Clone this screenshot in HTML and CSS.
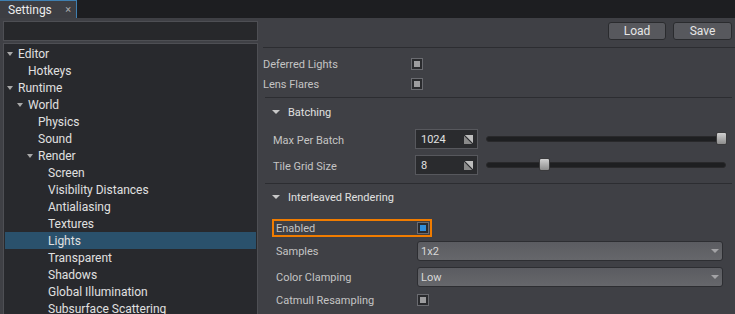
FILE: index.html
```html
<!DOCTYPE html>
<html>
<head>
<meta charset="utf-8">
<title>Settings</title>
<link rel="stylesheet" href="styles.css">
</head>
<body>
<div class="app">
  <div class="tabbar">
    <div class="tab"><span class="tab-title">Settings</span><span class="tab-close">×</span></div>
  </div>
  <div class="main">
    <div class="left">
      <div class="search"></div>
      <div class="tree">
        <div class="node lv0"><span class="twist open"></span>Editor</div>
        <div class="node lv1"><span class="twist"></span>Hotkeys</div>
        <div class="node lv0"><span class="twist open"></span>Runtime</div>
        <div class="node lv1"><span class="twist open"></span>World</div>
        <div class="node lv2"><span class="twist"></span>Physics</div>
        <div class="node lv2"><span class="twist"></span>Sound</div>
        <div class="node lv2"><span class="twist open"></span>Render</div>
        <div class="node lv3"><span class="twist"></span>Screen</div>
        <div class="node lv3"><span class="twist"></span>Visibility Distances</div>
        <div class="node lv3"><span class="twist"></span>Antialiasing</div>
        <div class="node lv3"><span class="twist"></span>Textures</div>
        <div class="node lv3 sel"><span class="twist"></span>Lights</div>
        <div class="node lv3"><span class="twist"></span>Transparent</div>
        <div class="node lv3"><span class="twist"></span>Shadows</div>
        <div class="node lv3"><span class="twist"></span>Global Illumination</div>
        <div class="node lv3"><span class="twist"></span>Subsurface Scattering</div>
      </div>
    </div>
    <div class="right">
      <div class="toolbar">
        <button class="btn load">Load</button>
        <button class="btn save">Save</button>
      </div>
      <div class="plain">
        <div class="prow"><span class="label">Deferred Lights</span><span class="check"></span></div>
        <div class="prow"><span class="label">Lens Flares</span><span class="check"></span></div>
      </div>
      <div class="section">
        <div class="shead"><span class="stri"></span><span class="stitle">Batching</span></div>
        <div class="brow">
          <span class="label">Max Per Batch</span>
          <div class="spin"><span class="val">1024</span><svg width="9" height="9" viewBox="0 0 9 9"><polygon points="0,0 9,0 9,9" fill="#bdbdbd"/><polygon points="0,0 0,9 9,9" fill="#8a8a8a"/><line x1="0" y1="0" x2="9" y2="9" stroke="#2a2b2e" stroke-width="1.2"/></svg></div>
          <div class="slider"><span class="handle" style="left:229px"></span></div>
        </div>
        <div class="brow">
          <span class="label">Tile Grid Size</span>
          <div class="spin"><span class="val">8</span><svg width="9" height="9" viewBox="0 0 9 9"><polygon points="0,0 9,0 9,9" fill="#bdbdbd"/><polygon points="0,0 0,9 9,9" fill="#8a8a8a"/><line x1="0" y1="0" x2="9" y2="9" stroke="#2a2b2e" stroke-width="1.2"/></svg></div>
          <div class="slider"><span class="handle" style="left:52px"></span></div>
        </div>
      </div>
      <div class="section s2">
        <div class="shead short"><span class="stri"></span><span class="stitle">Interleaved Rendering</span></div>
        <div class="focus"><span class="label">Enabled</span><span class="check on"></span></div>
        <div class="irow r-samples"><span class="label">Samples</span><div class="combo"><span class="val">1x2</span></div></div>
        <div class="irow r-clamp"><span class="label">Color Clamping</span><div class="combo"><span class="val">Low</span></div></div>
        <div class="irow r-catmull"><span class="label">Catmull Resampling</span><span class="check"></span></div>
      </div>
    </div>
  </div>
</div>
</body>
</html>
```

FILE: styles.css
```css
* { box-sizing: border-box; margin: 0; padding: 0; }
html, body { width: 735px; height: 314px; overflow: hidden; background: #3f4045; }
body { font-family: Roboto, "Noto Sans", "DejaVu Sans", sans-serif; font-size: 11px; color: #c4c4c4; }

.app { display: flex; flex-direction: column; height: 314px; }

.tabbar { height: 18px; flex: none; background: #1d1e21; display: flex; }
.tab { width: 77px; height: 18px; background: #3d3e43; border-top: 1px solid #3f7fb0; border-right: 1px solid #3f7fb0; display: flex; align-items: center; padding-left: 8px; color: #ececec; font-size: 12px; }
.tab-close { margin-left: auto; margin-right: 5px; color: #a8a8a8; font-size: 11px; }

.main { flex: 1; display: flex; min-height: 0; background: #3f4045; }

.left { width: 258px; flex: none; padding: 3px 0 0 3px; display: flex; flex-direction: column; gap: 2px; }
.search { height: 20px; flex: none; background: #27282b; border: 1px solid #4e4f54; }
.tree { flex: 1; background: #28292d; border: 1px solid #4e4f54; border-bottom: none; padding: 1px; overflow: hidden; }
.node { height: 17px; display: flex; align-items: center; color: #e0e0e0; font-size: 12px; white-space: nowrap; }
.node.sel { background: #2a516c; }
.lv0 { padding-left: 2px; }
.lv1 { padding-left: 12px; }
.lv2 { padding-left: 22px; }
.lv3 { padding-left: 32px; }
.twist { width: 11px; flex: none; display: flex; align-items: center; }
.twist.open::before { content: ""; border-left: 3.5px solid transparent; border-right: 3.5px solid transparent; border-top: 4px solid #a8a8a8; }

.right { flex: 1; min-width: 0; display: flex; flex-direction: column; }
.toolbar { flex: none; margin-left: 5px; height: 30px; padding: 4px 3px 0 0; border-bottom: 1px solid #2c2d31; display: flex; justify-content: flex-end; gap: 7px; }
.btn { height: 18px; border: 1px solid #2a2b2e; border-radius: 3px; background: #57585d; color: #e6e6e6; font-family: Roboto, "Noto Sans", sans-serif; font-size: 12px; line-height: 14px; }
.btn.load { width: 58px; }
.btn.save { width: 59px; }

.label { padding-top: 1px; }
.val { padding-top: 1px; }
.stitle { padding-top: 1px; }

.plain { padding: 6px 0 0 5px; }
.prow { height: 20px; display: flex; align-items: center; }
.prow .label { width: 148px; }

.check { width: 12px; height: 12px; flex: none; border: 1px solid #6a6b70; background: #2a2b2e; padding: 2px; display: flex; }
.check::after { content: ""; flex: 1; background: #9d9d9f; }
.check.on::after { background: #2f8edb; }

.section { margin: 3px 3px 0 7px; border-top: 1px solid #2c2d31; }
.section.s2 { margin-top: 5px; }
.shead { height: 28px; display: flex; align-items: center; padding-left: 7px; gap: 8px; color: #e0e0e0; }
.shead.short { height: 26px; }
.stri { border-left: 4px solid transparent; border-right: 4px solid transparent; border-top: 4px solid #c8c8c8; }

.brow { height: 26px; display: flex; align-items: center; padding-left: 8px; }
.brow .label { width: 142px; padding-top: 2px; }
.spin { width: 63px; height: 20px; flex: none; background: #2a2b2e; border: 1px solid #57585d; display: flex; align-items: center; padding: 0 4px 0 5px; color: #e0e0e0; }
.spin svg { margin-left: auto; }
.slider { margin-left: 8px; width: 240px; height: 6px; background: #1e1f21; border: 1px solid #29292b; border-radius: 3px; position: relative; }
.handle { position: absolute; top: -5px; width: 11px; height: 13px; border-radius: 2px; background: linear-gradient(#d0d0d0, #8c8c8c); border: 1px solid #3a3a3c; }

.focus { margin: 9px 0 0 7px; width: 160px; height: 18px; border: 2px solid #f07c00; display: flex; align-items: center; padding-left: 2px; }
.focus .label { width: 141px; }

.irow { display: flex; align-items: center; padding-left: 11px; }
.irow .label { width: 141px; }
.r-samples { height: 28px; }
.r-clamp { height: 24px; }
.r-catmull { height: 22px; }
.combo { width: 306px; height: 20px; border: 1px solid #2d2e32; border-radius: 3px; background: linear-gradient(#5b5c61, #66676b); display: flex; align-items: center; padding: 0 3px 0 3px; color: #d8d8d8; }
.combo::after { content: ""; margin-left: auto; border-left: 4px solid transparent; border-right: 4px solid transparent; border-top: 4px solid #a3a3a6; }
```
